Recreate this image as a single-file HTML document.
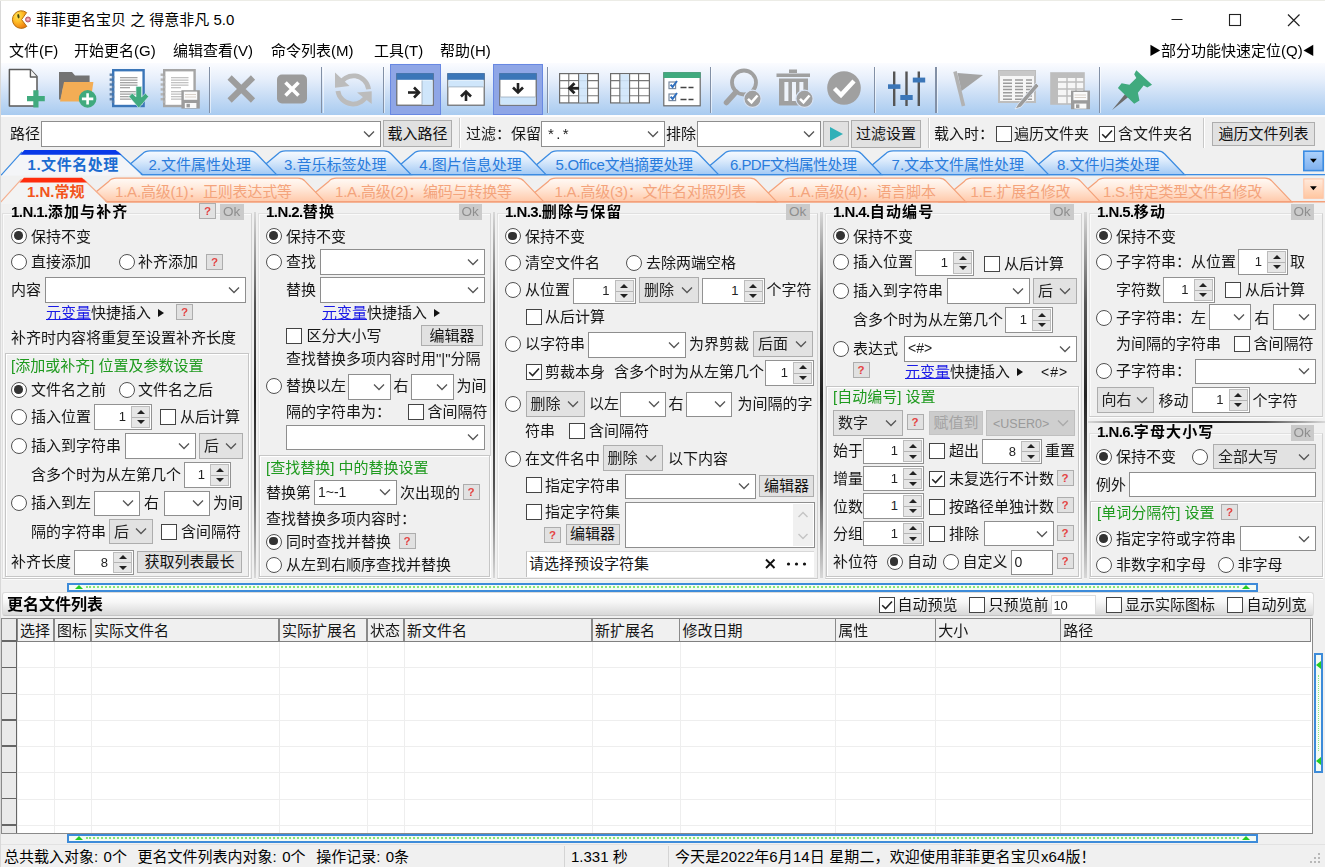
<!DOCTYPE html>
<html lang="zh-CN"><head><meta charset="utf-8"><title>菲菲更名宝贝 之 得意非凡 5.0</title>
<style>
html,body{margin:0;padding:0;background:#f0f0f0;}
body{width:1325px;height:867px;overflow:hidden;font-family:"Liberation Sans","Noto Sans CJK SC",sans-serif;font-size:15px;color:#111;}
#app{position:relative;width:1325px;height:867px;overflow:hidden;background:#f0f0f0;}
#app *{box-sizing:border-box;}
.t{position:absolute;height:20px;line-height:20px;white-space:pre;font-size:15px;color:#161616;}
.t.b{font-weight:bold;color:#000;}
.t.gr{color:#1e9a1e;}
.t.lnk u{color:#1a1ae6;text-decoration:underline;}
.rd{position:absolute;width:16px;height:16px;border-radius:50%;border:1.3px solid #505050;background:#fff;}
.rd.on::after{content:"";position:absolute;left:2.3px;top:2.3px;width:8.6px;height:8.6px;border-radius:50%;background:#333;}
.cb{position:absolute;width:16px;height:16px;border:1.3px solid #444;background:#fff;}
.cb svg{position:absolute;left:-1px;top:-1px;}
.cbx{position:absolute;background:#fff;border:1px solid #8e8e8e;white-space:nowrap;overflow:hidden;font-size:14px;color:#222;}
.cbx span{padding-left:3px;}
.cbx .chev{position:absolute;right:5px;top:50%;margin-top:-4px;}
.cbx.g{background:#e2e2e2;border-color:#adadad;font-size:15px;}
.cbx.g span{padding-left:4px;}
.cbx.d{background:#cfcfcf;border-color:#bfbfbf;color:#9a9a9a;}
.sp{position:absolute;background:#fff;border:1px solid #929292;font-size:13px;color:#222;}
.sp span{position:absolute;right:25px;top:0;}
.sp b{position:absolute;right:1px;top:1px;bottom:1px;width:19px;background:#e6e6e6;border:1px solid #bcbcbc;}
.sp b u{position:absolute;left:4.5px;top:2.5px;width:0;height:0;border-left:4px solid transparent;border-right:4px solid transparent;border-bottom:4.5px solid #222;}
.sp b s{position:absolute;left:4.5px;bottom:2.5px;width:0;height:0;border-left:4px solid transparent;border-right:4px solid transparent;border-top:4.5px solid #222;}
.sp b::after{content:"";position:absolute;left:0;right:0;top:50%;border-top:1px solid #b4b4b4;}
.bt{position:absolute;background:#e1e1e1;border:1px solid #adadad;text-align:center;white-space:nowrap;font-size:15px;color:#111;}
.bt.dis{background:#cccccc;border-color:#c4c4c4;color:#a3a3a3;}
.q{position:absolute;width:17px;height:16px;background:#e1e1e1;border:1px solid #adadad;color:#e44444;font-size:11.5px;font-weight:bold;line-height:14px;text-align:center;}
.okb{position:absolute;width:23.5px;height:15.5px;background:#cacaca;color:#8e8e8e;font-size:13.5px;line-height:15px;text-align:center;}
.inp{position:absolute;background:#fff;border:1px solid #8e8e8e;padding-left:3px;font-size:14px;color:#222;white-space:nowrap;}
.grp{position:absolute;border:1px solid #c6c6c6;box-shadow:inset 1px 1px 0 #fff, 1px 1px 0 #fff;}
.vsep{position:absolute;width:2.5px;background:linear-gradient(to bottom,#d8d8d8 0%,#555 25%,#222 50%,#555 75%,#d8d8d8 100%);}
.hsep{position:absolute;height:3px;background:linear-gradient(to right,#d8d8d8 0%,#555 25%,#222 50%,#555 75%,#d8d8d8 100%);}
.frm{position:absolute;border:1px solid #e0e0e0;border-right-color:#d2d2d2;border-bottom-color:#cacaca;box-shadow:inset 1px 1px 0 #fafafa, 0 1px 0 #fbfbfb;}
.tri{display:inline-block;width:0;height:0;border-top:4.6px solid transparent;border-bottom:4.6px solid transparent;border-left:6px solid #111;margin-left:7px;vertical-align:1.3px;}
#client{position:absolute;left:0;top:0;width:1325px;height:867px;filter:blur(0.42px);}

</style></head>
<body>
<div id="app">
<div class="" style="position:absolute;left:0px;top:0px;width:1325px;height:1px;background:#ecece6"></div>
<div class="" style="position:absolute;left:0px;top:1px;width:1325px;height:37px;background:#fff"></div>
<div class="" style="position:absolute;left:0px;top:38px;width:1325px;height:25px;background:#fff"></div>
<svg style="position:absolute;left:9px;top:8px" width="24" height="24" viewBox="0 0 24 24">
<defs><radialGradient id="pg" cx="38%" cy="30%" r="75%"><stop offset="0" stop-color="#ffe65a"/><stop offset="0.45" stop-color="#ffbe28"/><stop offset="1" stop-color="#ee7a0c"/></radialGradient></defs>
<path d="M12.6 11.6 L17.6 4.6 A8.8 8.8 0 1 0 17.8 18.4 Z" fill="url(#pg)" stroke="#b4700e" stroke-width="1" stroke-linejoin="round"/>
<ellipse cx="9.4" cy="8.2" rx="1.1" ry="2.3" fill="#4a4a10" transform="rotate(-8 9.4 8.2)"/>
<circle cx="19" cy="11.5" r="2.5" fill="#e88a98" stroke="#a85060" stroke-width="0.9"/><circle cx="19" cy="11.3" r="0.9" fill="#fbd0d6"/>
</svg>
<span class="t " style="left:36px;top:10px;font-size:15px;color:#000;">菲菲更名宝贝 之 得意非凡 5.0</span>
<svg style="position:absolute;left:1160px;top:1px" width="165" height="37" viewBox="0 0 165 37">
<path d="M11.5 18.5 H22.5" stroke="#222" stroke-width="1"/>
<rect x="69.5" y="13.5" width="11" height="11" fill="none" stroke="#222" stroke-width="1.1"/>
<path d="M128 13.5 L139.5 25 M139.5 13.5 L128 25" stroke="#222" stroke-width="1.2"/>
</svg>
<div id="client">
<span class="t " style="left:9px;top:41px;color:#000;">文件(F)</span>
<span class="t " style="left:74px;top:41px;color:#000;">开始更名(G)</span>
<span class="t " style="left:173px;top:41px;color:#000;">编辑查看(V)</span>
<span class="t " style="left:271px;top:41px;color:#000;">命令列表(M)</span>
<span class="t " style="left:374px;top:41px;color:#000;">工具(T)</span>
<span class="t " style="left:440px;top:41px;color:#000;">帮助(H)</span>
<span class="t " style="left:1149px;top:41px;color:#000;"><span style="font-size:12px;vertical-align:1px">▶</span>部分功能快速定位(Q)<span style="font-size:12px;vertical-align:1px">◀</span></span>
<div class="" style="position:absolute;left:0px;top:63px;width:1325px;height:52px;background:linear-gradient(to bottom,#fbfcff 0%,#e7effb 30%,#c7dcf5 65%,#a8cbf0 100%)"></div>
<div class="" style="position:absolute;left:0px;top:115px;width:1325px;height:2px;background:#fdfdfe"></div>
<div class="" style="position:absolute;left:208.8px;top:67px;width:1.3px;height:45.5px;background:#8290a6"></div>
<div class="" style="position:absolute;left:210.10000000000002px;top:67px;width:1px;height:45.5px;background:rgba(255,255,255,.55)"></div>
<div class="" style="position:absolute;left:321.2px;top:67px;width:1.3px;height:45.5px;background:#8290a6"></div>
<div class="" style="position:absolute;left:322.5px;top:67px;width:1px;height:45.5px;background:rgba(255,255,255,.55)"></div>
<div class="" style="position:absolute;left:382.6px;top:67px;width:1.3px;height:45.5px;background:#8290a6"></div>
<div class="" style="position:absolute;left:383.90000000000003px;top:67px;width:1px;height:45.5px;background:rgba(255,255,255,.55)"></div>
<div class="" style="position:absolute;left:546.6px;top:67px;width:1.3px;height:45.5px;background:#8290a6"></div>
<div class="" style="position:absolute;left:547.9px;top:67px;width:1px;height:45.5px;background:rgba(255,255,255,.55)"></div>
<div class="" style="position:absolute;left:709.8px;top:67px;width:1.3px;height:45.5px;background:#8290a6"></div>
<div class="" style="position:absolute;left:711.0999999999999px;top:67px;width:1px;height:45.5px;background:rgba(255,255,255,.55)"></div>
<div class="" style="position:absolute;left:873.8px;top:67px;width:1.3px;height:45.5px;background:#8290a6"></div>
<div class="" style="position:absolute;left:875.0999999999999px;top:67px;width:1px;height:45.5px;background:rgba(255,255,255,.55)"></div>
<div class="" style="position:absolute;left:935.3px;top:67px;width:1.3px;height:45.5px;background:#8290a6"></div>
<div class="" style="position:absolute;left:936.5999999999999px;top:67px;width:1px;height:45.5px;background:rgba(255,255,255,.55)"></div>
<div class="" style="position:absolute;left:1098.8px;top:67px;width:1.3px;height:45.5px;background:#8290a6"></div>
<div class="" style="position:absolute;left:1100.1px;top:67px;width:1px;height:45.5px;background:rgba(255,255,255,.55)"></div>
<div class="" style="position:absolute;left:390px;top:64px;width:50.5px;height:50.5px;background:#8fa6e6;border:1px solid #6888e2"></div>
<div class="" style="position:absolute;left:492.5px;top:64px;width:50.5px;height:50.5px;background:#8fa6e6;border:1px solid #6888e2"></div>
<svg style="position:absolute;left:6px;top:66px" width="42" height="46" viewBox="0 0 42 46"><path d="M3.4 3.6 H24.4 L31 10.6 V40 H3.4 Z" fill="#fff" stroke="#5a5a5a" stroke-width="1.5" stroke-linejoin="round"/>
<path d="M24.4 3.6 V11 H31" fill="#f4f4f4" stroke="#5a5a5a" stroke-width="1.4" stroke-linejoin="round"/>
<path d="M29.9 24.2 V41.4 M21 32.7 H38.8" stroke="#40aa7e" stroke-width="5.2"/></svg>
<svg style="position:absolute;left:55px;top:68px" width="44" height="42" viewBox="0 0 44 42"><path d="M4 4 H17 L20 7.4 H34.6 V20 H8 L6 31.5 H4 Z" fill="#737373"/>
<path d="M9 14 H38.4 L35.5 33.4 H5 Z" fill="#f3ad55"/>
<circle cx="32.6" cy="30.9" r="8.8" fill="#40aa7e"/>
<path d="M32.6 25.2 V36.6 M26.9 30.9 H38.3" stroke="#fff" stroke-width="2.6"/></svg>
<svg style="position:absolute;left:109px;top:67px" width="44" height="46" viewBox="0 0 44 46"><rect x="4.2" y="3.2" width="30.4" height="35.8" fill="#fff" stroke="#3b76b8" stroke-width="2.4"/><rect x="0.6" y="6.50" width="2.4" height="2.45" fill="#5c7fa8"/><rect x="2.8" y="8.95" width="2.4" height="2.45" fill="#5c7fa8"/><rect x="0.6" y="11.40" width="2.4" height="2.45" fill="#5c7fa8"/><rect x="2.8" y="13.85" width="2.4" height="2.45" fill="#5c7fa8"/><rect x="0.6" y="16.30" width="2.4" height="2.45" fill="#5c7fa8"/><rect x="2.8" y="18.75" width="2.4" height="2.45" fill="#5c7fa8"/><rect x="0.6" y="21.20" width="2.4" height="2.45" fill="#5c7fa8"/><rect x="2.8" y="23.65" width="2.4" height="2.45" fill="#5c7fa8"/><rect x="0.6" y="26.10" width="2.4" height="2.45" fill="#5c7fa8"/><rect x="2.8" y="28.55" width="2.4" height="2.45" fill="#5c7fa8"/><rect x="0.6" y="31.00" width="2.4" height="2.45" fill="#5c7fa8"/><rect x="2.8" y="33.45" width="2.4" height="2.45" fill="#5c7fa8"/><rect x="11" y="10" width="17.5" height="1.3" fill="#a4a4a4"/><rect x="11" y="12.5" width="17.5" height="1.3" fill="#a4a4a4"/><rect x="11" y="15" width="17.5" height="1.3" fill="#a4a4a4"/><rect x="11" y="17.5" width="17.5" height="1.3" fill="#a4a4a4"/><rect x="11" y="20" width="10" height="1.3" fill="#a4a4a4"/><rect x="11" y="24" width="17.5" height="1.3" fill="#a4a4a4"/><rect x="11" y="26.5" width="17.5" height="1.3" fill="#a4a4a4"/><rect x="11" y="29" width="17.5" height="1.3" fill="#a4a4a4"/><rect x="11" y="31.5" width="17.5" height="1.3" fill="#a4a4a4"/><path d="M27 19.5 H32.6 V30 L36.4 26.3 L39.6 29.6 L29.8 41 L20 29.6 L23.2 26.3 L27 30 Z" fill="#40aa7e" stroke="#d8eef0" stroke-width="0.6"/></svg>
<svg style="position:absolute;left:160px;top:67px" width="44" height="46" viewBox="0 0 44 46"><rect x="4.2" y="3.2" width="30.4" height="35.8" fill="#fff" stroke="#a6a6a6" stroke-width="2.4"/><rect x="0.6" y="6.50" width="2.4" height="2.45" fill="#b4b4b4"/><rect x="2.8" y="8.95" width="2.4" height="2.45" fill="#b4b4b4"/><rect x="0.6" y="11.40" width="2.4" height="2.45" fill="#b4b4b4"/><rect x="2.8" y="13.85" width="2.4" height="2.45" fill="#b4b4b4"/><rect x="0.6" y="16.30" width="2.4" height="2.45" fill="#b4b4b4"/><rect x="2.8" y="18.75" width="2.4" height="2.45" fill="#b4b4b4"/><rect x="0.6" y="21.20" width="2.4" height="2.45" fill="#b4b4b4"/><rect x="2.8" y="23.65" width="2.4" height="2.45" fill="#b4b4b4"/><rect x="0.6" y="26.10" width="2.4" height="2.45" fill="#b4b4b4"/><rect x="2.8" y="28.55" width="2.4" height="2.45" fill="#b4b4b4"/><rect x="0.6" y="31.00" width="2.4" height="2.45" fill="#b4b4b4"/><rect x="2.8" y="33.45" width="2.4" height="2.45" fill="#b4b4b4"/><rect x="11" y="10" width="17.5" height="1.3" fill="#c2c2c2"/><rect x="11" y="12.5" width="17.5" height="1.3" fill="#c2c2c2"/><rect x="11" y="15" width="17.5" height="1.3" fill="#c2c2c2"/><rect x="11" y="17.5" width="17.5" height="1.3" fill="#c2c2c2"/><rect x="11" y="20" width="10" height="1.3" fill="#c2c2c2"/><rect x="11" y="24" width="17.5" height="1.3" fill="#c2c2c2"/><rect x="11" y="26.5" width="17.5" height="1.3" fill="#c2c2c2"/><rect x="11" y="29" width="17.5" height="1.3" fill="#c2c2c2"/><rect x="11" y="31.5" width="17.5" height="1.3" fill="#c2c2c2"/><rect x="21.4" y="23.2" width="18.4" height="18.4" fill="#9c9c9c"/><rect x="23.8" y="24.6" width="13.4" height="8.2" fill="#fafafa"/><path d="M25 27.5 H36 M25 30 H36" stroke="#d8d0c8" stroke-width="1"/><rect x="24.8" y="36" width="11.6" height="5" fill="#fafafa"/><rect x="26.5" y="36.8" width="3.4" height="3.6" fill="#9c9c9c"/></svg>
<svg style="position:absolute;left:225px;top:72px" width="34" height="34" viewBox="0 0 34 34"><path d="M4.6 5.5 L28 28.5 M28 5.5 L4.6 28.5" stroke="#9d9d9d" stroke-width="6"/></svg>
<svg style="position:absolute;left:275px;top:72px" width="34" height="34" viewBox="0 0 34 34"><rect x="2" y="2.5" width="30" height="29" rx="5" fill="#9b9b9b"/><path d="M10.5 10.5 L23.5 23.5 M23.5 10.5 L10.5 23.5" stroke="#fff" stroke-width="3.6"/></svg>
<svg style="position:absolute;left:333px;top:70px" width="42" height="40" viewBox="0 0 42 40"><path d="M6.2 15.5 A15.3 15.3 0 0 1 35.6 19.3" fill="none" stroke="#bcbcbc" stroke-width="4.8"/><path d="M2 2.5 V17.7 L16.5 16 Z" fill="#bcbcbc"/>
<path d="M4.9 21 A15.3 15.3 0 0 0 34.4 24" fill="none" stroke="#bcbcbc" stroke-width="4.8"/><path d="M38.7 21.2 V34 L24 22.6 Z" fill="#bcbcbc"/></svg>
<svg style="position:absolute;left:395.8px;top:72.8px" width="38" height="33" viewBox="0 0 38 33"><rect x="0.8" y="0.8" width="36.4" height="31.4" fill="#fff" stroke="#6a6a6a" stroke-width="1.2"/><rect x="0.4" y="0.2" width="37.2" height="6.6" fill="#3b76b8"/><rect x="26" y="7.4" width="10.6" height="24.2" fill="#cfe6fb"/><path d="M26 7.4 V31.6" stroke="#9ab" stroke-width="0.8"/><path d="M12 19.5 H22" stroke="#222" stroke-width="2.6"/><path d="M18 14.5 L23 19.5 L18 24.5" fill="none" stroke="#222" stroke-width="2.6"/></svg>
<svg style="position:absolute;left:447.3px;top:72.8px" width="38" height="33" viewBox="0 0 38 33"><rect x="0.8" y="0.8" width="36.4" height="31.4" fill="#fff" stroke="#6a6a6a" stroke-width="1.2"/><rect x="0.4" y="0.2" width="37.2" height="6.6" fill="#3b76b8"/><rect x="1.4" y="7.4" width="35.2" height="6.5" fill="#cfe6fb"/><path d="M1.4 13.9 H36.6" stroke="#9ab" stroke-width="0.8"/><path d="M19 28 V19" stroke="#222" stroke-width="2.6"/><path d="M14 23.5 L19 18.5 L24 23.5" fill="none" stroke="#222" stroke-width="2.6"/></svg>
<svg style="position:absolute;left:498.8px;top:72.8px" width="38" height="33" viewBox="0 0 38 33"><rect x="0.8" y="0.8" width="36.4" height="31.4" fill="#fff" stroke="#6a6a6a" stroke-width="1.2"/><rect x="0.4" y="0.2" width="37.2" height="6.6" fill="#3b76b8"/><rect x="1.4" y="24" width="35.2" height="7.6" fill="#cfe6fb"/><path d="M1.4 24 H36.6" stroke="#9ab" stroke-width="0.8"/><path d="M19 10 V19" stroke="#222" stroke-width="2.6"/><path d="M14 14.5 L19 19.5 L24 14.5" fill="none" stroke="#222" stroke-width="2.6"/></svg>
<svg style="position:absolute;left:559px;top:73px" width="40" height="31" viewBox="0 0 40 31"><rect x="0.6" y="0.6" width="38.8" height="29.3" fill="#fff" stroke="#6c6c6c" stroke-width="1.2"/><path d="M0.6 7.6 H39.4" stroke="#777" stroke-width="1.1"/><path d="M0.6 15.2 H39.4" stroke="#777" stroke-width="1.1"/><path d="M0.6 22.8 H39.4" stroke="#777" stroke-width="1.1"/><rect x="19.6" y="1.2" width="9" height="28.2" fill="#cfe6fb" fill-opacity="0.9"/><path d="M9.8 0.6 V29.9" stroke="#6c6c6c" stroke-width="1.1"/><path d="M19.6 0.6 V29.9" stroke="#6c6c6c" stroke-width="1.1"/><path d="M28.6 0.6 V29.9" stroke="#6c6c6c" stroke-width="1.1"/><rect x="10.6" y="8.4" width="8.4" height="13.6" fill="#fff"/><path d="M11 15.3 H20" stroke="#222" stroke-width="2.8"/><path d="M15.5 10.3 L10.5 15.3 L15.5 20.3" fill="none" stroke="#222" stroke-width="2.8"/></svg>
<svg style="position:absolute;left:610px;top:73px" width="40" height="31" viewBox="0 0 40 31"><rect x="0.6" y="0.6" width="38.8" height="29.3" fill="#fff" stroke="#6c6c6c" stroke-width="1.2"/><path d="M0.6 7.6 H39.4" stroke="#777" stroke-width="1.1"/><path d="M0.6 15.2 H39.4" stroke="#777" stroke-width="1.1"/><path d="M0.6 22.8 H39.4" stroke="#777" stroke-width="1.1"/><rect x="9.8" y="1.2" width="9.8" height="28.2" fill="#cfe6fb" fill-opacity="0.9"/><path d="M9.8 0.6 V29.9" stroke="#6c6c6c" stroke-width="1.1"/><path d="M19.6 0.6 V29.9" stroke="#6c6c6c" stroke-width="1.1"/><path d="M28.6 0.6 V29.9" stroke="#6c6c6c" stroke-width="1.1"/></svg>
<svg style="position:absolute;left:662.5px;top:71.6px" width="38" height="35" viewBox="0 0 38 35"><rect x="0.8" y="0.8" width="36.4" height="33" fill="#fff" stroke="#6a6a6a" stroke-width="1.2"/><rect x="0.4" y="0.2" width="37.2" height="5.8" fill="#40aa7e"/>
<rect x="6" y="10" width="6.6" height="6.6" fill="none" stroke="#7a8aa0" stroke-width="1.2"/><path d="M7.6 12.6 L9.6 15 L14 9" fill="none" stroke="#2f6fbe" stroke-width="2"/>
<path d="M17.5 15.6 H23.5 M25.5 15.6 H30.5" stroke="#444" stroke-width="1.5"/>
<rect x="6" y="22" width="6.6" height="6.6" fill="none" stroke="#7a8aa0" stroke-width="1.2"/><path d="M7.6 24.6 L9.6 27 L14 21" fill="none" stroke="#2f6fbe" stroke-width="2"/>
<path d="M17.5 27.6 H23.5 M25.5 27.6 H30.5" stroke="#444" stroke-width="1.5"/></svg>
<svg style="position:absolute;left:720px;top:68px" width="44" height="42" viewBox="0 0 44 42"><circle cx="24" cy="14.5" r="12" fill="none" stroke="#a0a0a0" stroke-width="3.8"/><path d="M16 24 L6.5 34.5" stroke="#a0a0a0" stroke-width="5.5" stroke-linecap="round"/>
<circle cx="32.5" cy="30.8" r="8.6" fill="#a0a0a0" stroke="#d6e2f4" stroke-width="1.2"/><path d="M28 30.8 L31.5 34.3 L37.5 27.5" fill="none" stroke="#fff" stroke-width="2.6"/></svg>
<svg style="position:absolute;left:774px;top:68px" width="42" height="42" viewBox="0 0 42 42"><path d="M15 3.2 H23 M2.5 7.2 H36" stroke="#a0a0a0" stroke-width="3.6"/><path d="M5 10.5 H34 V37.5 H5 Z" fill="#a0a0a0"/>
<path d="M12.4 14 V33 M20 14 V33 M27.4 14 V24" stroke="#eef3fb" stroke-width="4"/>
<circle cx="30.5" cy="30.8" r="8.6" fill="#a0a0a0" stroke="#d6e2f4" stroke-width="1.2"/><path d="M26 30.8 L29.5 34.3 L35.5 27.5" fill="none" stroke="#fff" stroke-width="2.6"/></svg>
<svg style="position:absolute;left:826px;top:70.3px" width="36" height="36" viewBox="0 0 36 36"><circle cx="18" cy="18" r="16.8" fill="#a0a0a0"/><path d="M8.5 18.5 L15 25 L28 11" fill="none" stroke="#fff" stroke-width="4.4"/></svg>
<svg style="position:absolute;left:885px;top:68px" width="44" height="42" viewBox="0 0 44 42"><path d="M9.2 3.6 V38 M21.5 3.6 V38 M33.8 3.6 V38" stroke="#555" stroke-width="2.4"/>
<rect x="3" y="16.3" width="12.4" height="4.6" fill="#3b76b8"/><rect x="15.3" y="27" width="12.4" height="5" fill="#3b76b8"/><rect x="27.8" y="9.6" width="12.4" height="4.9" fill="#3b76b8"/></svg>
<svg style="position:absolute;left:950px;top:68px" width="36" height="42" viewBox="0 0 36 42"><path d="M5 3.5 L13.5 38" stroke="#b2b2b2" stroke-width="3.6"/><path d="M7.5 5 L33 7 L11.5 23 Z" fill="#a4a4a4"/></svg>
<svg style="position:absolute;left:996px;top:68px" width="46" height="42" viewBox="0 0 46 42"><rect x="3" y="3" width="36" height="31" fill="#f6f6f6" stroke="#bdbdbd" stroke-width="2"/><rect x="3" y="3" width="36" height="5" fill="#c8c8c8"/>
<path d="M7 12.0 H16 M19 12.0 H27 M30 12.0 H36" stroke="#9b9b9b" stroke-width="1.5"/><path d="M7 15.2 H16 M19 15.2 H27 M30 15.2 H36" stroke="#9b9b9b" stroke-width="1.5"/><path d="M7 18.4 H16 M19 18.4 H27 M30 18.4 H36" stroke="#9b9b9b" stroke-width="1.5"/><path d="M7 21.6 H16 M19 21.6 H27 M30 21.6 H36" stroke="#9b9b9b" stroke-width="1.5"/><path d="M7 24.8 H16 M19 24.8 H27 M30 24.8 H36" stroke="#9b9b9b" stroke-width="1.5"/><path d="M7 28.0 H16 M19 28.0 H27 M30 28.0 H36" stroke="#9b9b9b" stroke-width="1.5"/><path d="M7 31.2 H16 M19 31.2 H27 M30 31.2 H36" stroke="#9b9b9b" stroke-width="1.5"/><path d="M40 15 L22 36 L19 41 L25 39 L43 18 Z" fill="#9b9b9b" stroke="#e6eefa" stroke-width="0.8"/></svg>
<svg style="position:absolute;left:1047.5px;top:69.5px" width="46" height="42" viewBox="0 0 46 42"><rect x="3" y="3" width="33" height="31" fill="#f6f6f6" stroke="#bdbdbd" stroke-width="1.6"/><rect x="3" y="3" width="33" height="5" fill="#bdbdbd"/><rect x="3" y="3" width="7" height="31" fill="#bdbdbd"/>
<path d="M3 12 H36 M3 19 H36 M3 26 H36 M19 3 V34 M28 3 V34" stroke="#bdbdbd" stroke-width="1.4"/>
<rect x="23" y="20.6" width="19" height="18.6" fill="#9c9c9c"/><rect x="25.4" y="22" width="14" height="8.2" fill="#fafafa"/><path d="M26.6 25 H38 M26.6 27.5 H38" stroke="#d8d0c8" stroke-width="1"/><rect x="26.4" y="33.6" width="12" height="5" fill="#fafafa"/><rect x="28" y="34.4" width="3.4" height="3.6" fill="#9c9c9c"/></svg>
<svg style="position:absolute;left:1109px;top:66.5px" width="46" height="46" viewBox="0 0 46 46"><g transform="scale(1.05)"><path d="M3 41 L16 25 L19 28 Z" fill="#6c6c6c"/>
<path d="M26 3 L41 17 L36.5 19.5 L33 17.5 L27.5 24.5 L29 32 L24 35 L8.5 20 L12 15.5 L19.5 17 L26 10.5 L24 7 Z" fill="#40aa7e"/></g></svg>
<div class="" style="position:absolute;left:0px;top:117px;width:1325px;height:33px;background:#f0f0f0"></div>
<span class="t " style="left:10px;top:124px;">路径</span>
<div class="cbx" style="left:41px;top:120.5px;width:340px;height:26px;line-height:24px"><span></span><svg class="chev" width="12" height="8" viewBox="0 0 12 8"><path d="M1 1.5 L6 6.5 L11 1.5" fill="none" stroke="#555" stroke-width="1.3"/></svg></div>
<div class="bt " style="left:383px;top:119.5px;width:69px;height:27.5px;line-height:25.5px">载入路径</div>
<div class="" style="position:absolute;left:459px;top:118px;width:1px;height:31px;background:#c8c8c8"></div>
<div class="" style="position:absolute;left:460px;top:118px;width:1px;height:31px;background:#fff"></div>
<span class="t " style="left:466px;top:124px;">过滤：保留</span>
<div class="cbx" style="left:541px;top:120.5px;width:124px;height:26px;line-height:24px"><span><span style="letter-spacing:2.4px;font-size:15px">*.*</span></span><svg class="chev" width="12" height="8" viewBox="0 0 12 8"><path d="M1 1.5 L6 6.5 L11 1.5" fill="none" stroke="#555" stroke-width="1.3"/></svg></div>
<span class="t " style="left:666px;top:124px;">排除</span>
<div class="cbx" style="left:697px;top:120.5px;width:124px;height:26px;line-height:24px"><span></span><svg class="chev" width="12" height="8" viewBox="0 0 12 8"><path d="M1 1.5 L6 6.5 L11 1.5" fill="none" stroke="#555" stroke-width="1.3"/></svg></div>
<div class="bt" style="left:823px;top:121px;width:26px;height:26px"><svg width="24" height="24" viewBox="0 0 24 24" style="position:absolute;left:0;top:0"><path d="M6 5 L19 12 L6 19 Z" fill="#2fb0b8"/></svg></div>
<div class="bt " style="left:851px;top:120px;width:70px;height:28px;line-height:26px">过滤设置</div>
<div class="" style="position:absolute;left:928px;top:118px;width:1px;height:31px;background:#c8c8c8"></div>
<div class="" style="position:absolute;left:929px;top:118px;width:1px;height:31px;background:#fff"></div>
<span class="t " style="left:934px;top:124px;">载入时：</span>
<i class="cb" style="left:996px;top:126px"></i>
<span class="t " style="left:1014px;top:124px;">遍历文件夹</span>
<i class="cb" style="left:1099px;top:126px"><svg width="16" height="16" viewBox="0 0 16 16"><path d="M3.2 8.2 L6.6 11.6 L13 4.4" fill="none" stroke="#222" stroke-width="1.5"/></svg></i>
<span class="t " style="left:1118px;top:124px;">含文件夹名</span>
<div class="" style="position:absolute;left:1203px;top:118px;width:1px;height:31px;background:#c8c8c8"></div>
<div class="" style="position:absolute;left:1204px;top:118px;width:1px;height:31px;background:#fff"></div>
<div class="bt " style="left:1212px;top:122px;width:103px;height:24px;line-height:22px">遍历文件列表</div>
<svg style="position:absolute;left:0;top:148px" width="1325" height="57" viewBox="0 148 1325 57"><defs>
<linearGradient id="tb" x1="0" y1="0" x2="0" y2="1"><stop offset="0" stop-color="#f8fbff"/><stop offset="0.4" stop-color="#dcebfc"/><stop offset="1" stop-color="#a2c9f4"/></linearGradient>
<linearGradient id="to" x1="0" y1="0" x2="0" y2="1"><stop offset="0" stop-color="#fffaf6"/><stop offset="0.4" stop-color="#ffeadc"/><stop offset="1" stop-color="#ffc9aa"/></linearGradient>
<linearGradient id="bb" x1="0" y1="0" x2="0" y2="1"><stop offset="0" stop-color="#aed2fc"/><stop offset="1" stop-color="#7fb0ee"/></linearGradient>
<linearGradient id="ob" x1="0" y1="0" x2="0" y2="1"><stop offset="0" stop-color="#ffeadc"/><stop offset="1" stop-color="#ffc6a0"/></linearGradient>
</defs><rect x="0" y="148" width="1325" height="30" fill="#f0f0f0"/><path d="M1026 174.8 L1051 153.8 Q1053.5 150.8 1058.5 150.8 L1157.5 150.8 Q1162.0 150.8 1164.5 153.8 L1184.7 174.8 Z" fill="url(#tb)" stroke="#3c8ce2" stroke-width="1.3"/><path d="M860.6 174.8 L885.6 153.8 Q888.1 150.8 893.1 150.8 L1021.5 150.8 Q1026.0 150.8 1028.5 153.8 L1048.7 174.8 Z" fill="url(#tb)" stroke="#3c8ce2" stroke-width="1.3"/><path d="M699 174.8 L724 153.8 Q726.5 150.8 731.5 150.8 L854.5 150.8 Q859.0 150.8 861.5 153.8 L881.7 174.8 Z" fill="url(#tb)" stroke="#3c8ce2" stroke-width="1.3"/><path d="M524.6 174.8 L549.6 153.8 Q552.1 150.8 557.1 150.8 L691.5 150.8 Q696.0 150.8 698.5 153.8 L718.7 174.8 Z" fill="url(#tb)" stroke="#3c8ce2" stroke-width="1.3"/><path d="M388.3 174.8 L413.3 153.8 Q415.8 150.8 420.8 150.8 L519.0 150.8 Q523.5 150.8 526.0 153.8 L546.2 174.8 Z" fill="url(#tb)" stroke="#3c8ce2" stroke-width="1.3"/><path d="M253 174.8 L278 153.8 Q280.5 150.8 285.5 150.8 L384.0 150.8 Q388.5 150.8 391.0 153.8 L411.2 174.8 Z" fill="url(#tb)" stroke="#3c8ce2" stroke-width="1.3"/><path d="M117.5 174.8 L142.5 153.8 Q145.0 150.8 150.0 150.8 L249.5 150.8 Q254.0 150.8 256.5 153.8 L276.7 174.8 Z" fill="url(#tb)" stroke="#3c8ce2" stroke-width="1.3"/><path d="M0 174.8 H1325" stroke="#3c8ce2" stroke-width="1.5"/><path d="M0.0 176.8 L22.0 151.8 L117.5 151.8 L143.0 176.8 Z" fill="#f4f5f8"/><path d="M0.5 175.8 L22.0 151.8 M117.5 151.8 L142.7 174.8" fill="none" stroke="#3c8ce2" stroke-width="1.2"/><path d="M20.0 154.8 L24.5 149.9 L115.7 149.9 L121.5 154.8 Z" fill="#0838e8"/><rect x="0" y="175.60000000000002" width="1325" height="28" fill="#f0f0f0"/><path d="M1072 201.8 L1097 181.2 Q1099.5 178.2 1104.5 178.2 L1265 178.2 Q1269.5 178.2 1272 181.2 L1291.8 201.8 Z" fill="url(#to)" stroke="#f4a27a" stroke-width="1.2"/><path d="M939.5 201.8 L964.5 181.2 Q967.0 178.2 972.0 178.2 L1073.5 178.2 Q1078.0 178.2 1080.5 181.2 L1100.3 201.8 Z" fill="url(#to)" stroke="#f4a27a" stroke-width="1.2"/><path d="M757.5 201.8 L782.5 181.2 Q785.0 178.2 790.0 178.2 L939 178.2 Q943.5 178.2 946 181.2 L965.8 201.8 Z" fill="url(#to)" stroke="#f4a27a" stroke-width="1.2"/><path d="M523.5 201.8 L548.5 181.2 Q551.0 178.2 556.0 178.2 L750 178.2 Q754.5 178.2 757 181.2 L776.8 201.8 Z" fill="url(#to)" stroke="#f4a27a" stroke-width="1.2"/><path d="M304 201.8 L329 181.2 Q331.5 178.2 336.5 178.2 L517 178.2 Q521.5 178.2 524 181.2 L543.8 201.8 Z" fill="url(#to)" stroke="#f4a27a" stroke-width="1.2"/><path d="M84 201.8 L109 181.2 Q111.5 178.2 116.5 178.2 L298 178.2 Q302.5 178.2 305 181.2 L324.8 201.8 Z" fill="url(#to)" stroke="#f4a27a" stroke-width="1.2"/><path d="M0 201.8 H1325" stroke="#f4a07a" stroke-width="1.6"/><path d="M-0.5 203.8 L21.5 179.2 L83.5 179.2 L107.5 203.8 Z" fill="#f3f3f3"/><path d="M0 202.8 L21.5 179.2 M83.5 179.2 L107.0 201.8" fill="none" stroke="#f4b090" stroke-width="1.2"/><path d="M19.5 182.39999999999998 L24 177.79999999999998 L82.0 177.79999999999998 L87.0 182.39999999999998 Z" fill="#ff2c0c"/><rect x="1303.8" y="151.2" width="19.4" height="19.4" fill="url(#bb)" stroke="#3c8ce2" stroke-width="1.6"/><path d="M1310 158.8 H1316.8 L1313.4 162.8 Z" fill="#000"/><rect x="1303.8" y="178.9" width="19.4" height="19.4" fill="url(#ob)" stroke="#ffc4a4" stroke-width="1"/><path d="M1310 186.2 H1316.8 L1313.4 190.2 Z" fill="#000"/></svg>
<span class="t b" style="left:27.5px;top:155px;color:#1c6cd0;letter-spacing:0.55px">1.文件名处理</span>
<span class="t " style="left:148.5px;top:155px;color:#2a7cdc;font-size:15px;letter-spacing:0">2.文件属性处理</span>
<span class="t " style="left:284px;top:155px;color:#2a7cdc;font-size:15px;letter-spacing:0">3.音乐标签处理</span>
<span class="t " style="left:419.3px;top:155px;color:#2a7cdc;font-size:15px;letter-spacing:0">4.图片信息处理</span>
<span class="t " style="left:555.6px;top:155px;color:#2a7cdc;font-size:15px;letter-spacing:-0.3px">5.Office文档摘要处理</span>
<span class="t " style="left:730px;top:155px;color:#2a7cdc;font-size:15px;letter-spacing:-0.55px">6.PDF文档属性处理</span>
<span class="t " style="left:891.6px;top:155px;color:#2a7cdc;font-size:15px;letter-spacing:0">7.文本文件属性处理</span>
<span class="t " style="left:1057px;top:155px;color:#2a7cdc;font-size:15px;letter-spacing:0">8.文件归类处理</span>
<span class="t b" style="left:27px;top:181.6px;color:#f2541c;">1.N.常规</span>
<span class="t " style="left:115px;top:181.6px;color:#f4a47c;font-size:15px;letter-spacing:-0.2px">1.A.高级(1)：正则表达式等</span>
<span class="t " style="left:335px;top:181.6px;color:#f4a47c;font-size:15px;letter-spacing:-0.2px">1.A.高级(2)：编码与转换等</span>
<span class="t " style="left:554.5px;top:181.6px;color:#f4a47c;font-size:15px;letter-spacing:-0.2px">1.A.高级(3)：文件名对照列表</span>
<span class="t " style="left:788.5px;top:181.6px;color:#f4a47c;font-size:15px;letter-spacing:-0.2px">1.A.高级(4)：语言脚本</span>
<span class="t " style="left:970.5px;top:181.6px;color:#f4a47c;font-size:15px;letter-spacing:-0.2px">1.E.扩展名修改</span>
<span class="t " style="left:1103px;top:181.6px;color:#f4a47c;font-size:15px;letter-spacing:-0.2px">1.S.特定类型文件名修改</span>
<div class="vsep" style="left:253.5px;top:212px;height:366px"></div>
<div class="vsep" style="left:492.5px;top:212px;height:366px"></div>
<div class="vsep" style="left:820px;top:212px;height:366px"></div>
<div class="vsep" style="left:1084px;top:212px;height:366px"></div>
<div class="hsep" style="left:1088px;top:420.6px;width:237px;height:2.3px"></div>
<div class="frm" style="left:2px;top:213px;width:250px;height:366px"></div>
<div class="frm" style="left:258px;top:213px;width:233px;height:366px"></div>
<div class="frm" style="left:497px;top:213px;width:321px;height:366px"></div>
<div class="frm" style="left:825px;top:213px;width:257px;height:366px"></div>
<div class="frm" style="left:1089px;top:213px;width:234px;height:204px"></div>
<div class="frm" style="left:1089px;top:433px;width:234px;height:146px"></div>
<span class="t b" style="left:11px;top:201.6px;"><span style="letter-spacing:-0.55px">1.N.1.</span><span style="letter-spacing:1.15px">添加与补齐</span></span>
<div class="q" style="left:199px;top:203.4px">?</div>
<div class="okb" style="left:220px;top:204px">Ok</div>
<i class="rd on" style="left:11px;top:228px"></i>
<span class="t " style="left:31px;top:226.5px;">保持不变</span>
<i class="rd" style="left:11px;top:254px"></i>
<span class="t " style="left:31px;top:252px;">直接添加</span>
<i class="rd" style="left:119px;top:254px"></i>
<span class="t " style="left:138px;top:252px;">补齐添加</span>
<div class="q" style="left:206px;top:254.4px">?</div>
<span class="t " style="left:11px;top:280px;">内容</span>
<div class="cbx" style="left:45px;top:277px;width:201px;height:25.5px;line-height:23.5px"><span></span><svg class="chev" width="12" height="8" viewBox="0 0 12 8"><path d="M1 1.5 L6 6.5 L11 1.5" fill="none" stroke="#555" stroke-width="1.3"/></svg></div>
<span class="t lnk" style="left:46px;top:303px;"><u>元变量</u>快捷插入<i class="tri"></i></span>
<div class="q" style="left:176px;top:304.4px">?</div>
<span class="t " style="left:11px;top:328px;">补齐时内容将重复至设置补齐长度</span>
<div class="grp" style="left:5px;top:353px;width:244px;height:224px"></div>
<span class="t gr" style="left:11px;top:355.5px;">[添加或补齐] 位置及参数设置</span>
<i class="rd on" style="left:11px;top:382px"></i>
<span class="t " style="left:31px;top:380px;">文件名之前</span>
<i class="rd" style="left:119px;top:382px"></i>
<span class="t " style="left:138px;top:380px;">文件名之后</span>
<i class="rd" style="left:11px;top:409px"></i>
<span class="t " style="left:31px;top:407px;">插入位置</span>
<div class="sp" style="left:94px;top:404px;width:58px;height:25.5px;line-height:23.5px"><span>1</span><b><u></u><s></s></b></div>
<i class="cb" style="left:160px;top:409px"></i>
<span class="t " style="left:180px;top:407px;">从后计算</span>
<i class="rd" style="left:11px;top:437.5px"></i>
<span class="t " style="left:31px;top:435.5px;">插入到字符串</span>
<div class="cbx" style="left:125px;top:433px;width:71px;height:25.5px;line-height:23.5px"><span></span><svg class="chev" width="12" height="8" viewBox="0 0 12 8"><path d="M1 1.5 L6 6.5 L11 1.5" fill="none" stroke="#555" stroke-width="1.3"/></svg></div>
<div class="cbx g" style="left:199px;top:433px;width:44px;height:25.5px;line-height:23.5px"><span>后</span><svg class="chev" width="12" height="8" viewBox="0 0 12 8"><path d="M1 1.5 L6 6.5 L11 1.5" fill="none" stroke="#555" stroke-width="1.3"/></svg></div>
<span class="t " style="left:31px;top:464.5px;">含多个时为从左第几个</span>
<div class="sp" style="left:184px;top:462px;width:47px;height:25.5px;line-height:23.5px"><span>1</span><b><u></u><s></s></b></div>
<i class="rd" style="left:11px;top:495px"></i>
<span class="t " style="left:31px;top:493px;">插入到左</span>
<div class="cbx" style="left:94px;top:490.5px;width:46px;height:25.5px;line-height:23.5px"><span></span><svg class="chev" width="12" height="8" viewBox="0 0 12 8"><path d="M1 1.5 L6 6.5 L11 1.5" fill="none" stroke="#555" stroke-width="1.3"/></svg></div>
<span class="t " style="left:144px;top:493px;">右</span>
<div class="cbx" style="left:164px;top:490.5px;width:46px;height:25.5px;line-height:23.5px"><span></span><svg class="chev" width="12" height="8" viewBox="0 0 12 8"><path d="M1 1.5 L6 6.5 L11 1.5" fill="none" stroke="#555" stroke-width="1.3"/></svg></div>
<span class="t " style="left:213px;top:493px;">为间</span>
<span class="t " style="left:31px;top:521.5px;">隔的字符串</span>
<div class="cbx g" style="left:109px;top:518.5px;width:44px;height:25.5px;line-height:23.5px"><span>后</span><svg class="chev" width="12" height="8" viewBox="0 0 12 8"><path d="M1 1.5 L6 6.5 L11 1.5" fill="none" stroke="#555" stroke-width="1.3"/></svg></div>
<i class="cb" style="left:161px;top:523.5px"></i>
<span class="t " style="left:181px;top:521.5px;">含间隔符</span>
<span class="t " style="left:11px;top:552px;">补齐长度</span>
<div class="sp" style="left:74px;top:549.5px;width:60px;height:25.5px;line-height:23.5px"><span>8</span><b><u></u><s></s></b></div>
<div class="bt " style="left:137px;top:551px;width:105px;height:22px;line-height:20px">获取列表最长</div>
<span class="t b" style="left:266px;top:201.6px;"><span style="letter-spacing:-0.55px">1.N.2.</span><span style="letter-spacing:1.15px">替换</span></span>
<div class="okb" style="left:458.5px;top:204px">Ok</div>
<i class="rd on" style="left:266px;top:228px"></i>
<span class="t " style="left:286px;top:226.5px;">保持不变</span>
<i class="rd" style="left:266px;top:254px"></i>
<span class="t " style="left:286px;top:252px;">查找</span>
<div class="cbx" style="left:320px;top:249px;width:165px;height:25.5px;line-height:23.5px"><span></span><svg class="chev" width="12" height="8" viewBox="0 0 12 8"><path d="M1 1.5 L6 6.5 L11 1.5" fill="none" stroke="#555" stroke-width="1.3"/></svg></div>
<span class="t " style="left:286px;top:279.5px;">替换</span>
<div class="cbx" style="left:320px;top:277px;width:165px;height:25.5px;line-height:23.5px"><span></span><svg class="chev" width="12" height="8" viewBox="0 0 12 8"><path d="M1 1.5 L6 6.5 L11 1.5" fill="none" stroke="#555" stroke-width="1.3"/></svg></div>
<span class="t lnk" style="left:322px;top:303px;"><u>元变量</u>快捷插入<i class="tri"></i></span>
<i class="cb" style="left:286px;top:327.5px"></i>
<span class="t " style="left:306.5px;top:325.5px;">区分大小写</span>
<div class="bt " style="left:421px;top:324.5px;width:62px;height:21.5px;line-height:19.5px">编辑器</div>
<span class="t " style="left:286px;top:349px;">查找替换多项内容时用"|"分隔</span>
<i class="rd" style="left:266px;top:377.5px"></i>
<span class="t " style="left:286px;top:375.5px;">替换以左</span>
<div class="cbx" style="left:348px;top:374px;width:43px;height:26px;line-height:24px"><span></span><svg class="chev" width="12" height="8" viewBox="0 0 12 8"><path d="M1 1.5 L6 6.5 L11 1.5" fill="none" stroke="#555" stroke-width="1.3"/></svg></div>
<span class="t " style="left:393.5px;top:375.5px;">右</span>
<div class="cbx" style="left:410.5px;top:374px;width:43px;height:26px;line-height:24px"><span></span><svg class="chev" width="12" height="8" viewBox="0 0 12 8"><path d="M1 1.5 L6 6.5 L11 1.5" fill="none" stroke="#555" stroke-width="1.3"/></svg></div>
<span class="t " style="left:456.5px;top:375.5px;">为间</span>
<span class="t " style="left:286px;top:401.5px;">隔的字符串为：</span>
<i class="cb" style="left:407.5px;top:403.5px"></i>
<span class="t " style="left:427.5px;top:401.5px;">含间隔符</span>
<div class="cbx" style="left:286px;top:424.5px;width:199px;height:25.5px;line-height:23.5px"><span></span><svg class="chev" width="12" height="8" viewBox="0 0 12 8"><path d="M1 1.5 L6 6.5 L11 1.5" fill="none" stroke="#555" stroke-width="1.3"/></svg></div>
<div class="grp" style="left:259px;top:455px;width:231px;height:122px"></div>
<span class="t gr" style="left:266px;top:457.5px;">[查找替换] 中的替换设置</span>
<span class="t " style="left:266px;top:483px;">替换第</span>
<div class="cbx" style="left:314px;top:479.5px;width:83px;height:25.5px;line-height:23.5px"><span>1~-1</span><svg class="chev" width="12" height="8" viewBox="0 0 12 8"><path d="M1 1.5 L6 6.5 L11 1.5" fill="none" stroke="#555" stroke-width="1.3"/></svg></div>
<span class="t " style="left:400px;top:483px;">次出现的</span>
<div class="q" style="left:462.5px;top:484.4px">?</div>
<span class="t " style="left:266px;top:508.5px;">查找替换多项内容时：</span>
<i class="rd on" style="left:266px;top:533.5px"></i>
<span class="t " style="left:286px;top:531.5px;">同时查找并替换</span>
<div class="q" style="left:398.5px;top:533.4px">?</div>
<i class="rd" style="left:266px;top:556.5px"></i>
<span class="t " style="left:286px;top:554.5px;">从左到右顺序查找并替换</span>
<span class="t b" style="left:505px;top:201.6px;"><span style="letter-spacing:-0.55px">1.N.3.</span><span style="letter-spacing:1.15px">删除与保留</span></span>
<div class="okb" style="left:786px;top:204px">Ok</div>
<i class="rd on" style="left:505px;top:228.3px"></i>
<span class="t " style="left:525px;top:227px;">保持不变</span>
<i class="rd" style="left:505px;top:255px"></i>
<span class="t " style="left:525px;top:253px;">清空文件名</span>
<i class="rd" style="left:626px;top:255px"></i>
<span class="t " style="left:646px;top:253px;">去除两端空格</span>
<i class="rd" style="left:505px;top:282px"></i>
<span class="t " style="left:525px;top:280px;">从位置</span>
<div class="sp" style="left:572.5px;top:278px;width:63px;height:25.5px;line-height:23.5px"><span>1</span><b><u></u><s></s></b></div>
<div class="cbx g" style="left:639px;top:277px;width:60px;height:25.5px;line-height:23.5px"><span>删除</span><svg class="chev" width="12" height="8" viewBox="0 0 12 8"><path d="M1 1.5 L6 6.5 L11 1.5" fill="none" stroke="#555" stroke-width="1.3"/></svg></div>
<div class="sp" style="left:701.5px;top:278px;width:63px;height:25.5px;line-height:23.5px"><span>1</span><b><u></u><s></s></b></div>
<span class="t " style="left:766.5px;top:280px;">个字符</span>
<i class="cb" style="left:525.5px;top:308.5px"></i>
<span class="t " style="left:545px;top:306.5px;">从后计算</span>
<i class="rd" style="left:505px;top:336px"></i>
<span class="t " style="left:525px;top:334px;">以字符串</span>
<div class="cbx" style="left:587.5px;top:332px;width:98px;height:25.5px;line-height:23.5px"><span></span><svg class="chev" width="12" height="8" viewBox="0 0 12 8"><path d="M1 1.5 L6 6.5 L11 1.5" fill="none" stroke="#555" stroke-width="1.3"/></svg></div>
<span class="t " style="left:689px;top:334px;">为界剪裁</span>
<div class="cbx g" style="left:753px;top:331px;width:60px;height:25.5px;line-height:23.5px"><span>后面</span><svg class="chev" width="12" height="8" viewBox="0 0 12 8"><path d="M1 1.5 L6 6.5 L11 1.5" fill="none" stroke="#555" stroke-width="1.3"/></svg></div>
<i class="cb" style="left:525.5px;top:364px"><svg width="16" height="16" viewBox="0 0 16 16"><path d="M3.2 8.2 L6.6 11.6 L13 4.4" fill="none" stroke="#222" stroke-width="1.5"/></svg></i>
<span class="t " style="left:545px;top:362px;">剪裁本身</span>
<span class="t " style="left:614px;top:362px;">含多个时为从左第几个</span>
<div class="sp" style="left:765px;top:359.5px;width:49px;height:26px;line-height:24px"><span>1</span><b><u></u><s></s></b></div>
<i class="rd" style="left:505px;top:396px"></i>
<div class="cbx g" style="left:525.5px;top:391px;width:59px;height:25.5px;line-height:23.5px"><span>删除</span><svg class="chev" width="12" height="8" viewBox="0 0 12 8"><path d="M1 1.5 L6 6.5 L11 1.5" fill="none" stroke="#555" stroke-width="1.3"/></svg></div>
<span class="t " style="left:589px;top:394px;">以左</span>
<div class="cbx" style="left:620px;top:391.5px;width:46px;height:25.5px;line-height:23.5px"><span></span><svg class="chev" width="12" height="8" viewBox="0 0 12 8"><path d="M1 1.5 L6 6.5 L11 1.5" fill="none" stroke="#555" stroke-width="1.3"/></svg></div>
<span class="t " style="left:668.5px;top:394px;">右</span>
<div class="cbx" style="left:686px;top:391.5px;width:46px;height:25.5px;line-height:23.5px"><span></span><svg class="chev" width="12" height="8" viewBox="0 0 12 8"><path d="M1 1.5 L6 6.5 L11 1.5" fill="none" stroke="#555" stroke-width="1.3"/></svg></div>
<span class="t " style="left:737.5px;top:394px;">为间隔的字</span>
<span class="t " style="left:525px;top:421px;">符串</span>
<i class="cb" style="left:569px;top:423px"></i>
<span class="t " style="left:589px;top:421px;">含间隔符</span>
<i class="rd" style="left:505px;top:450.5px"></i>
<span class="t " style="left:525px;top:448.5px;">在文件名中</span>
<div class="cbx g" style="left:602.5px;top:445px;width:60px;height:25.5px;line-height:23.5px"><span>删除</span><svg class="chev" width="12" height="8" viewBox="0 0 12 8"><path d="M1 1.5 L6 6.5 L11 1.5" fill="none" stroke="#555" stroke-width="1.3"/></svg></div>
<span class="t " style="left:668px;top:448.5px;">以下内容</span>
<i class="cb" style="left:525.5px;top:477px"></i>
<span class="t " style="left:545px;top:476px;">指定字符串</span>
<div class="cbx" style="left:624.5px;top:473.5px;width:131.5px;height:25.5px;line-height:23.5px"><span></span><svg class="chev" width="12" height="8" viewBox="0 0 12 8"><path d="M1 1.5 L6 6.5 L11 1.5" fill="none" stroke="#555" stroke-width="1.3"/></svg></div>
<div class="bt " style="left:759px;top:474.5px;width:55px;height:22px;line-height:20px">编辑器</div>
<i class="cb" style="left:525.5px;top:503.5px"></i>
<span class="t " style="left:545px;top:501.5px;">指定字符集</span>
<div class="inp" style="left:624.5px;top:502px;width:190px;height:45.5px"><div style="position:absolute;right:1px;top:1px;bottom:1px;width:20px;background:#f0f0f0"><svg width="20" height="43" viewBox="0 0 20 43"><path d="M5.5 13 L10 8.5 L14.5 13 M5.5 30 L10 34.5 L14.5 30" fill="none" stroke="#c4c4c4" stroke-width="1.4"/></svg></div></div>
<div class="q" style="left:544px;top:526.9px">?</div>
<div class="bt " style="left:565.5px;top:524px;width:54px;height:20.5px;line-height:18.5px">编辑器</div>
<div style="position:absolute;left:525.5px;top:550.5px;width:288.5px;height:26.5px;background:#fff;border-left:1px solid #c0c0c0;border-top:1px solid #d8d8d8"></div>
<span class="t " style="left:529px;top:554px;">请选择预设字符集</span>
<svg style="position:absolute;left:764px;top:557px" width="46" height="14" viewBox="0 0 46 14"><path d="M2 2.5 L10.5 11 M10.5 2.5 L2 11" stroke="#111" stroke-width="1.9"/><circle cx="24.5" cy="7" r="1.6" fill="#111"/><circle cx="32.5" cy="7" r="1.6" fill="#111"/><circle cx="40.5" cy="7" r="1.6" fill="#111"/></svg>
<span class="t b" style="left:833px;top:201.6px;"><span style="letter-spacing:-0.55px">1.N.4.</span><span style="letter-spacing:1.15px">自动编号</span></span>
<div class="okb" style="left:1050px;top:204px">Ok</div>
<i class="rd on" style="left:833px;top:228px"></i>
<span class="t " style="left:853px;top:226.5px;">保持不变</span>
<i class="rd" style="left:833px;top:254px"></i>
<span class="t " style="left:853px;top:252px;">插入位置</span>
<div class="sp" style="left:915px;top:250px;width:59px;height:25.5px;line-height:23.5px"><span>1</span><b><u></u><s></s></b></div>
<i class="cb" style="left:984px;top:255.5px"></i>
<span class="t " style="left:1004px;top:253.5px;">从后计算</span>
<i class="rd" style="left:833px;top:282.5px"></i>
<span class="t " style="left:853px;top:280.5px;">插入到字符串</span>
<div class="cbx" style="left:946.5px;top:278px;width:83px;height:25.5px;line-height:23.5px"><span></span><svg class="chev" width="12" height="8" viewBox="0 0 12 8"><path d="M1 1.5 L6 6.5 L11 1.5" fill="none" stroke="#555" stroke-width="1.3"/></svg></div>
<div class="cbx g" style="left:1033px;top:278px;width:44px;height:25.5px;line-height:23.5px"><span>后</span><svg class="chev" width="12" height="8" viewBox="0 0 12 8"><path d="M1 1.5 L6 6.5 L11 1.5" fill="none" stroke="#555" stroke-width="1.3"/></svg></div>
<span class="t " style="left:853px;top:310px;">含多个时为从左第几个</span>
<div class="sp" style="left:1005px;top:307px;width:48px;height:25.5px;line-height:23.5px"><span>1</span><b><u></u><s></s></b></div>
<i class="rd" style="left:833px;top:341px"></i>
<span class="t " style="left:853px;top:339px;">表达式</span>
<div class="cbx" style="left:904px;top:336px;width:173px;height:25.5px;line-height:23.5px"><span>&lt;#&gt;</span><svg class="chev" width="12" height="8" viewBox="0 0 12 8"><path d="M1 1.5 L6 6.5 L11 1.5" fill="none" stroke="#555" stroke-width="1.3"/></svg></div>
<div class="q" style="left:852.5px;top:362.4px">?</div>
<span class="t lnk" style="left:905px;top:362px;"><u>元变量</u>快捷插入<i class="tri"></i></span>
<span class="t " style="left:1041px;top:362px;font-size:14px;letter-spacing:1px">&lt;#&gt;</span>
<div class="grp" style="left:826px;top:385.5px;width:253px;height:191.5px"></div>
<span class="t gr" style="left:833px;top:387px;">[自动编号] 设置</span>
<div class="cbx g" style="left:833px;top:410px;width:70px;height:25.5px;line-height:23.5px"><span>数字</span><svg class="chev" width="12" height="8" viewBox="0 0 12 8"><path d="M1 1.5 L6 6.5 L11 1.5" fill="none" stroke="#555" stroke-width="1.3"/></svg></div>
<div class="q" style="left:906.5px;top:413.9px">?</div>
<div class="bt dis" style="left:929px;top:410.5px;width:54px;height:24px;line-height:22px">赋值到</div>
<div class="cbx g d" style="left:986px;top:409.5px;width:89px;height:26px;line-height:24px"><span><span style="font-size:12.5px;padding-left:2px">&lt;USER0&gt;</span></span><svg class="chev" width="12" height="8" viewBox="0 0 12 8"><path d="M1 1.5 L6 6.5 L11 1.5" fill="none" stroke="#aaa" stroke-width="1.3"/></svg></div>
<span class="t " style="left:833px;top:441px;">始于</span>
<div class="sp" style="left:863px;top:438px;width:61px;height:26px;line-height:24px"><span>1</span><b><u></u><s></s></b></div>
<i class="cb" style="left:929px;top:443px"></i>
<span class="t " style="left:949px;top:441px;">超出</span>
<div class="sp" style="left:981.5px;top:438.5px;width:60.5px;height:25.5px;line-height:23.5px"><span>8</span><b><u></u><s></s></b></div>
<span class="t " style="left:1045px;top:441px;">重置</span>
<span class="t " style="left:833px;top:469px;">增量</span>
<div class="sp" style="left:863px;top:465.8px;width:61px;height:25.7px;line-height:23.7px"><span>1</span><b><u></u><s></s></b></div>
<i class="cb" style="left:929px;top:471px"><svg width="16" height="16" viewBox="0 0 16 16"><path d="M3.2 8.2 L6.6 11.6 L13 4.4" fill="none" stroke="#222" stroke-width="1.5"/></svg></i>
<span class="t " style="left:949px;top:469px;">未复选行不计数</span>
<div class="q" style="left:1056.5px;top:470.4px">?</div>
<span class="t " style="left:833px;top:496.5px;">位数</span>
<div class="sp" style="left:863px;top:493px;width:61px;height:25.7px;line-height:23.7px"><span>1</span><b><u></u><s></s></b></div>
<i class="cb" style="left:929px;top:498.5px"></i>
<span class="t " style="left:949px;top:496.5px;">按路径单独计数</span>
<div class="q" style="left:1056.5px;top:497.4px">?</div>
<span class="t " style="left:833px;top:523.5px;">分组</span>
<div class="sp" style="left:863px;top:520.6px;width:61px;height:25.7px;line-height:23.7px"><span>1</span><b><u></u><s></s></b></div>
<i class="cb" style="left:929px;top:525.5px"></i>
<span class="t " style="left:949px;top:523.5px;">排除</span>
<div class="cbx" style="left:983.5px;top:521px;width:70px;height:25px;line-height:23px"><span></span><svg class="chev" width="12" height="8" viewBox="0 0 12 8"><path d="M1 1.5 L6 6.5 L11 1.5" fill="none" stroke="#555" stroke-width="1.3"/></svg></div>
<div class="q" style="left:1056.5px;top:525.4px">?</div>
<span class="t " style="left:833px;top:552px;">补位符</span>
<i class="rd on" style="left:886.5px;top:554px"></i>
<span class="t " style="left:907px;top:552px;">自动</span>
<i class="rd" style="left:943px;top:554px"></i>
<span class="t " style="left:962.5px;top:552px;">自定义</span>
<div class="inp" style="left:1010.5px;top:549.5px;width:42px;height:25.5px;line-height:23.5px">0</div>
<div class="q" style="left:1056.5px;top:553.4px">?</div>
<span class="t b" style="left:1097px;top:201.6px;"><span style="letter-spacing:-0.55px">1.N.5.</span><span style="letter-spacing:1.15px">移动</span></span>
<div class="okb" style="left:1290.5px;top:204px">Ok</div>
<i class="rd on" style="left:1096px;top:228px"></i>
<span class="t " style="left:1116px;top:226.5px;">保持不变</span>
<i class="rd" style="left:1096px;top:254px"></i>
<span class="t " style="left:1116px;top:252px;">子字符串：从位置</span>
<div class="sp" style="left:1238px;top:249px;width:50px;height:25.5px;line-height:23.5px"><span>1</span><b><u></u><s></s></b></div>
<span class="t " style="left:1290px;top:252px;">取</span>
<span class="t " style="left:1116px;top:279.5px;">字符数</span>
<div class="sp" style="left:1163px;top:277px;width:51.5px;height:25.5px;line-height:23.5px"><span>1</span><b><u></u><s></s></b></div>
<i class="cb" style="left:1225px;top:281.5px"></i>
<span class="t " style="left:1245px;top:279.5px;">从后计算</span>
<i class="rd" style="left:1096px;top:309.5px"></i>
<span class="t " style="left:1116px;top:307.5px;">子字符串：左</span>
<div class="cbx" style="left:1208.5px;top:304px;width:42.5px;height:25.5px;line-height:23.5px"><span></span><svg class="chev" width="12" height="8" viewBox="0 0 12 8"><path d="M1 1.5 L6 6.5 L11 1.5" fill="none" stroke="#555" stroke-width="1.3"/></svg></div>
<span class="t " style="left:1254.5px;top:307.5px;">右</span>
<div class="cbx" style="left:1273px;top:304px;width:43px;height:25.5px;line-height:23.5px"><span></span><svg class="chev" width="12" height="8" viewBox="0 0 12 8"><path d="M1 1.5 L6 6.5 L11 1.5" fill="none" stroke="#555" stroke-width="1.3"/></svg></div>
<span class="t " style="left:1116px;top:334px;">为间隔的字符串</span>
<i class="cb" style="left:1234px;top:336px"></i>
<span class="t " style="left:1253.5px;top:334px;">含间隔符</span>
<i class="rd" style="left:1096px;top:363px"></i>
<span class="t " style="left:1116px;top:361px;">子字符串：</span>
<div class="cbx" style="left:1195px;top:358.5px;width:121px;height:25px;line-height:23px"><span></span><svg class="chev" width="12" height="8" viewBox="0 0 12 8"><path d="M1 1.5 L6 6.5 L11 1.5" fill="none" stroke="#555" stroke-width="1.3"/></svg></div>
<div class="cbx g" style="left:1096.5px;top:387px;width:57.5px;height:25.5px;line-height:23.5px"><span>向右</span><svg class="chev" width="12" height="8" viewBox="0 0 12 8"><path d="M1 1.5 L6 6.5 L11 1.5" fill="none" stroke="#555" stroke-width="1.3"/></svg></div>
<span class="t " style="left:1158.5px;top:390.5px;">移动</span>
<div class="sp" style="left:1191.5px;top:387px;width:58px;height:25.5px;line-height:23.5px"><span>1</span><b><u></u><s></s></b></div>
<span class="t " style="left:1252.5px;top:390.5px;">个字符</span>
<span class="t b" style="left:1097px;top:422.3px;"><span style="letter-spacing:-0.55px">1.N.6.</span><span style="letter-spacing:1.15px">字母大小写</span></span>
<div class="okb" style="left:1290.5px;top:425px">Ok</div>
<i class="rd on" style="left:1096px;top:449px"></i>
<span class="t " style="left:1116px;top:447px;">保持不变</span>
<i class="rd" style="left:1191.5px;top:449px"></i>
<div class="cbx g" style="left:1213px;top:444px;width:103px;height:25px;line-height:23px"><span>全部大写</span><svg class="chev" width="12" height="8" viewBox="0 0 12 8"><path d="M1 1.5 L6 6.5 L11 1.5" fill="none" stroke="#555" stroke-width="1.3"/></svg></div>
<span class="t " style="left:1096px;top:475px;">例外</span>
<div class="inp" style="left:1129px;top:472px;width:187px;height:25px;line-height:23px"></div>
<div class="grp" style="left:1090px;top:501px;width:233px;height:76px"></div>
<span class="t gr" style="left:1097px;top:503px;">[单词分隔符] 设置</span>
<div class="q" style="left:1221px;top:504.4px">?</div>
<i class="rd on" style="left:1096px;top:531px"></i>
<span class="t " style="left:1116px;top:529px;">指定字符或字符串</span>
<div class="cbx" style="left:1240px;top:526px;width:76px;height:25px;line-height:23px"><span></span><svg class="chev" width="12" height="8" viewBox="0 0 12 8"><path d="M1 1.5 L6 6.5 L11 1.5" fill="none" stroke="#555" stroke-width="1.3"/></svg></div>
<i class="rd" style="left:1096px;top:556.5px"></i>
<span class="t " style="left:1116px;top:554.5px;">非数字和字母</span>
<i class="rd" style="left:1217.5px;top:556.5px"></i>
<span class="t " style="left:1237.5px;top:554.5px;">非字母</span>
<div style="position:absolute;left:67px;top:583px;width:1190.5px;height:8.5px;border:2px solid #3d8bd9;background:#f4fbf4"><div style="position:absolute;left:17px;right:17px;top:1.2px;height:0;border-top:2px dotted #86e676"></div><i style="position:absolute;left:5.5px;top:0px;border-left:4px solid transparent;border-right:4px solid transparent;border-bottom:4.5px solid #22cc22"></i><i style="position:absolute;right:5.5px;top:0px;border-left:4px solid transparent;border-right:4px solid transparent;border-bottom:4.5px solid #22cc22"></i></div>
<div style="position:absolute;left:1.5px;top:592px;width:1312px;height:24px;border-radius:3px;border:1px solid #dadada;border-bottom-color:#c4c4c4;background:linear-gradient(to bottom,#ffffff 0%,#f7f7f7 40%,#d8d8d8 100%)"></div>
<span class="t b" style="left:7px;top:595.2px;font-size:16px">更名文件列表</span>
<i class="cb" style="left:879px;top:596.5px"><svg width="16" height="16" viewBox="0 0 16 16"><path d="M3.2 8.2 L6.6 11.6 L13 4.4" fill="none" stroke="#222" stroke-width="1.5"/></svg></i>
<span class="t " style="left:897.5px;top:594.5px;">自动预览</span>
<i class="cb" style="left:969px;top:596.5px"></i>
<span class="t " style="left:988.5px;top:594.5px;">只预览前</span>
<div class="inp" style="left:1051px;top:594.5px;width:45px;height:20.5px;line-height:19px;border-color:#dcdcdc;font-size:13px;padding-left:1.5px;letter-spacing:-0.3px">10</div>
<i class="cb" style="left:1106px;top:596.5px"></i>
<span class="t " style="left:1125px;top:594.5px;">显示实际图标</span>
<i class="cb" style="left:1226.5px;top:596.5px"></i>
<span class="t " style="left:1246.5px;top:594.5px;">自动列宽</span>
<div style="position:absolute;left:1px;top:618px;width:1312px;height:216px;background:#fff;border:1px solid #8a8a8a"></div>
<div style="position:absolute;left:2px;top:619px;width:1309px;height:22.5px;background:#f0f0f0;border-bottom:1.8px solid #808080;border-right:1.6px solid #8a8a8a"></div>
<div style="position:absolute;left:16.2px;top:619px;width:1.6px;height:22px;background:#8a8a8a"></div>
<span class="t " style="left:20px;top:620.5px;">选择</span>
<div style="position:absolute;left:17px;top:642px;width:1px;height:191px;background:#eeeeee"></div>
<div style="position:absolute;left:53.2px;top:619px;width:1.6px;height:22px;background:#8a8a8a"></div>
<span class="t " style="left:57px;top:620.5px;">图标</span>
<div style="position:absolute;left:54px;top:642px;width:1px;height:191px;background:#eeeeee"></div>
<div style="position:absolute;left:90.2px;top:619px;width:1.6px;height:22px;background:#8a8a8a"></div>
<span class="t " style="left:94px;top:620.5px;">实际文件名</span>
<div style="position:absolute;left:91px;top:642px;width:1px;height:191px;background:#eeeeee"></div>
<div style="position:absolute;left:278.2px;top:619px;width:1.6px;height:22px;background:#8a8a8a"></div>
<span class="t " style="left:282px;top:620.5px;">实际扩展名</span>
<div style="position:absolute;left:279px;top:642px;width:1px;height:191px;background:#eeeeee"></div>
<div style="position:absolute;left:366.2px;top:619px;width:1.6px;height:22px;background:#8a8a8a"></div>
<span class="t " style="left:370px;top:620.5px;">状态</span>
<div style="position:absolute;left:367px;top:642px;width:1px;height:191px;background:#eeeeee"></div>
<div style="position:absolute;left:403.2px;top:619px;width:1.6px;height:22px;background:#8a8a8a"></div>
<span class="t " style="left:407px;top:620.5px;">新文件名</span>
<div style="position:absolute;left:404px;top:642px;width:1px;height:191px;background:#eeeeee"></div>
<div style="position:absolute;left:591.2px;top:619px;width:1.6px;height:22px;background:#8a8a8a"></div>
<span class="t " style="left:595px;top:620.5px;">新扩展名</span>
<div style="position:absolute;left:592px;top:642px;width:1px;height:191px;background:#eeeeee"></div>
<div style="position:absolute;left:678.7px;top:619px;width:1.6px;height:22px;background:#8a8a8a"></div>
<span class="t " style="left:682.5px;top:620.5px;">修改日期</span>
<div style="position:absolute;left:679.5px;top:642px;width:1px;height:191px;background:#eeeeee"></div>
<div style="position:absolute;left:834.5px;top:619px;width:1.6px;height:22px;background:#8a8a8a"></div>
<span class="t " style="left:838.3px;top:620.5px;">属性</span>
<div style="position:absolute;left:835.3px;top:642px;width:1px;height:191px;background:#eeeeee"></div>
<div style="position:absolute;left:934.5px;top:619px;width:1.6px;height:22px;background:#8a8a8a"></div>
<span class="t " style="left:938.3px;top:620.5px;">大小</span>
<div style="position:absolute;left:935.3px;top:642px;width:1px;height:191px;background:#eeeeee"></div>
<div style="position:absolute;left:1059.5px;top:619px;width:1.6px;height:22px;background:#8a8a8a"></div>
<span class="t " style="left:1063.3px;top:620.5px;">路径</span>
<div style="position:absolute;left:1060.3px;top:642px;width:1px;height:191px;background:#eeeeee"></div>
<div style="position:absolute;left:2px;top:619px;width:15px;height:214px;background:#eaeaea;border-right:1.6px solid #666"></div>
<div style="position:absolute;left:2px;top:640.4px;width:15px;height:1.6px;background:#666"></div>
<div style="position:absolute;left:2px;top:666.5px;width:15px;height:1.6px;background:#666"></div>
<div style="position:absolute;left:17.5px;top:667.2px;width:1293px;height:1px;background:#eeeeee"></div>
<div style="position:absolute;left:2px;top:692.7px;width:15px;height:1.6px;background:#666"></div>
<div style="position:absolute;left:17.5px;top:693.5px;width:1293px;height:1px;background:#eeeeee"></div>
<div style="position:absolute;left:2px;top:719.0px;width:15px;height:1.6px;background:#666"></div>
<div style="position:absolute;left:17.5px;top:719.8px;width:1293px;height:1px;background:#eeeeee"></div>
<div style="position:absolute;left:2px;top:745.2px;width:15px;height:1.6px;background:#666"></div>
<div style="position:absolute;left:17.5px;top:746.0px;width:1293px;height:1px;background:#eeeeee"></div>
<div style="position:absolute;left:2px;top:771.5px;width:15px;height:1.6px;background:#666"></div>
<div style="position:absolute;left:17.5px;top:772.2px;width:1293px;height:1px;background:#eeeeee"></div>
<div style="position:absolute;left:2px;top:797.7px;width:15px;height:1.6px;background:#666"></div>
<div style="position:absolute;left:17.5px;top:798.5px;width:1293px;height:1px;background:#eeeeee"></div>
<div style="position:absolute;left:2px;top:824.0px;width:15px;height:1.6px;background:#666"></div>
<div style="position:absolute;left:17.5px;top:824.8px;width:1293px;height:1px;background:#eeeeee"></div>
<div style="position:absolute;left:1313.5px;top:653px;width:9.5px;height:119.5px;border:2px solid #3d8bd9;background:#f4fbf4"><div style="position:absolute;left:2px;top:20px;bottom:20px;width:0;border-left:1.6px dotted #8eea7e"></div><i style="position:absolute;left:0.5px;top:6px;border-top:4px solid transparent;border-bottom:4px solid transparent;border-right:5px solid #22cc22"></i><i style="position:absolute;left:0.5px;bottom:6px;border-top:4px solid transparent;border-bottom:4px solid transparent;border-right:5px solid #22cc22"></i></div>
<div style="position:absolute;left:67px;top:834px;width:1190.5px;height:8.5px;border:2px solid #3d8bd9;background:#f4fbf4"><div style="position:absolute;left:17px;right:17px;top:1.2px;height:0;border-top:2px dotted #86e676"></div><i style="position:absolute;left:5.5px;top:0px;border-left:4px solid transparent;border-right:4px solid transparent;border-bottom:4.5px solid #22cc22"></i><i style="position:absolute;right:5.5px;top:0px;border-left:4px solid transparent;border-right:4px solid transparent;border-bottom:4.5px solid #22cc22"></i></div>
<div class="" style="position:absolute;left:0px;top:844px;width:1325px;height:23px;background:#f0f0f0;border-top:1px solid #e2e2e2"></div>
<span class="t " style="left:4px;top:847px;color:#000;word-spacing:1.2px">总共载入对象: 0个  更名文件列表内对象: 0个  操作记录: 0条</span>
<div class="" style="position:absolute;left:564px;top:846px;width:1px;height:21px;background:#d4d4d4"></div>
<span class="t " style="left:571px;top:847px;color:#000">1.331 秒</span>
<div class="" style="position:absolute;left:668px;top:846px;width:1px;height:21px;background:#d4d4d4"></div>
<span class="t " style="left:675px;top:847px;color:#000;letter-spacing:0.12px">今天是2022年6月14日 星期二，欢迎使用菲菲更名宝贝x64版！</span>
<svg style="position:absolute;left:1308px;top:851px" width="14" height="14" viewBox="0 0 14 14"><g fill="#b8b8b8"><rect x="10" y="2" width="2" height="2"/><rect x="6" y="6" width="2" height="2"/><rect x="10" y="6" width="2" height="2"/><rect x="2" y="10" width="2" height="2"/><rect x="6" y="10" width="2" height="2"/><rect x="10" y="10" width="2" height="2"/></g></svg>
</div>
<div class="" style="position:absolute;left:0px;top:1px;width:1px;height:866px;background:#d8d8d8"></div>
</div>
</body></html>
